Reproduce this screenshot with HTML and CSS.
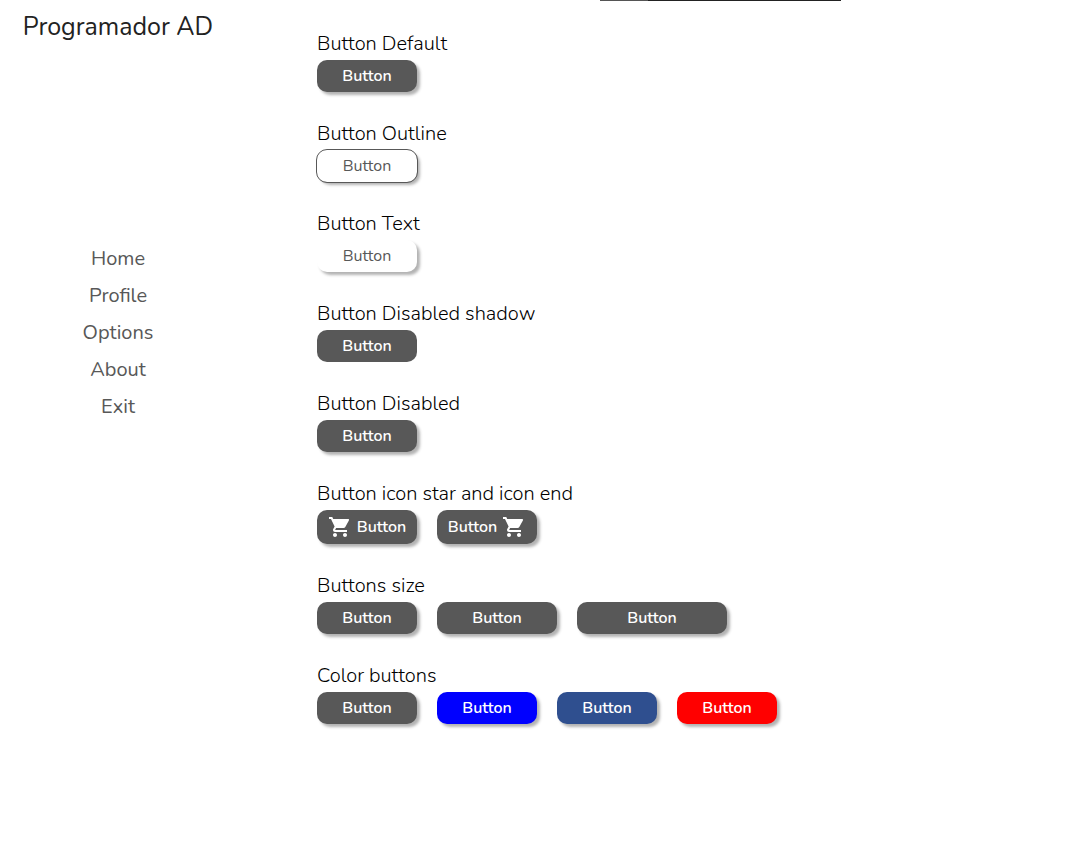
FILE: index.html
```html
<!DOCTYPE html>
<html lang="en">
<head>
<meta charset="utf-8">
<meta name="viewport" content="width=device-width, initial-scale=1">
<title>Programador AD</title>
<link rel="stylesheet" href="styles.css">
</head>
<body>
<svg width="0" height="0" class="sprite" aria-hidden="true">
  <symbol id="cart" viewBox="0 0 24 24">
    <path d="M7 18c-1.100 0-1.990.9-1.990 2S5.900 22 7 22s2-.9 2-2-.9-2-2-2zM1 2v2h2l3.600 7.590-1.350 2.450c-.16.28-.25.61-.25.96 0 1.100.9 2 2 2h12v-2H7.420c-.14 0-.25-.11-.25-.25l.03-.12.9-1.630h7.450c.75 0 1.410-.41 1.750-1.030l3.580-6.490A1 1 0 0 0 20 4H5.210l-.94-2H1zm16 16c-1.100 0-1.990.9-1.990 2s.89 2 1.990 2 2-.9 2-2-.9-2-2-2z"/>
  </symbol>
</svg>
<div class="top-line"></div>
<div class="layout">
  <aside class="sidebar">
    <h1 class="brand">Programador AD</h1>
    <nav class="menu">
      <a href="#home">Home</a>
      <a href="#profile">Profile</a>
      <a href="#options">Options</a>
      <a href="#about">About</a>
      <a href="#exit">Exit</a>
    </nav>
  </aside>
  <main class="content">
    <section>
      <h2 class="label">Button Default</h2>
      <div class="row"><button class="btn">Button</button></div>
    </section>
    <section>
      <h2 class="label">Button Outline</h2>
      <div class="row"><button class="btn btn-text btn-outline">Button</button></div>
    </section>
    <section>
      <h2 class="label">Button Text</h2>
      <div class="row"><button class="btn btn-text">Button</button></div>
    </section>
    <section>
      <h2 class="label">Button Disabled shadow</h2>
      <div class="row"><button class="btn btn-flat">Button</button></div>
    </section>
    <section>
      <h2 class="label">Button Disabled</h2>
      <div class="row"><button class="btn" disabled>Button</button></div>
    </section>
    <section>
      <h2 class="label">Button icon star and icon end</h2>
      <div class="row">
        <button class="btn btn-icon"><svg class="icon"><use href="#cart"/></svg>Button</button>
        <button class="btn btn-icon">Button<svg class="icon"><use href="#cart"/></svg></button>
      </div>
    </section>
    <section>
      <h2 class="label">Buttons size</h2>
      <div class="row">
        <button class="btn">Button</button>
        <button class="btn btn-md">Button</button>
        <button class="btn btn-lg">Button</button>
      </div>
    </section>
    <section>
      <h2 class="label">Color buttons</h2>
      <div class="row">
        <button class="btn">Button</button>
        <button class="btn btn-blue">Button</button>
        <button class="btn btn-navy">Button</button>
        <button class="btn btn-red">Button</button>
      </div>
    </section>
  </main>
</div>
</body>
</html>
```

FILE: styles.css
```css
* { box-sizing: border-box; }

body {
  margin: 0;
  background: #fff;
  color: #000;
  font-family: Nunito, "Open Sans", sans-serif;
}

.sprite { position: absolute; }

.top-line {
  position: absolute;
  top: 0;
  left: 600px;
  width: 241px;
  height: 1px;
  background: linear-gradient(to right, #555 48px, #222 48px);
}

.layout {
  display: grid;
  grid-template-columns: 236px 1fr;
  min-height: 100vh;
}

.sidebar { text-align: center; }

.brand {
  margin: 0;
  padding-top: 10px;
  color: #222;
  font-size: 25px;
  font-weight: 400;
  line-height: 34px;
  white-space: nowrap;
}

.menu {
  display: flex;
  flex-direction: column;
  align-items: center;
  gap: 9px;
  margin-top: 201px;
}

.menu a {
  color: #585858;
  font-size: 20px;
  line-height: 28px;
  text-decoration: none;
}

.content {
  display: flex;
  flex-direction: column;
  gap: 28px;
  padding: 30px 20px 30px 81px;
}

.label {
  margin: 0 0 2px;
  font-size: 20px;
  font-weight: 300;
  line-height: 28px;
}

.row {
  display: flex;
  flex-wrap: wrap;
  gap: 20px;
}

.btn {
  width: 100px;
  height: 32px;
  padding: 0;
  border: 0;
  border-radius: 10px;
  background: #585858;
  box-shadow: 3px 3px 3px rgba(0, 0, 0, 0.3);
  color: #fff;
  font-family: inherit;
  font-size: 16px;
  font-weight: 600;
  line-height: 22px;
}

.btn-text {
  background: #fff;
  color: #585858;
  font-weight: 400;
}

.btn-outline { outline: 1px solid #585858; }

.btn-flat { box-shadow: none; }

.btn-icon {
  display: flex;
  align-items: center;
  justify-content: center;
  gap: 5px;
  height: 34px;
}

.icon {
  width: 24px;
  height: 24px;
  fill: currentColor;
}

.btn-md { width: 120px; }
.btn-lg { width: 150px; }
.btn-blue { background: #00f; }
.btn-navy { background: #2f4f8f; }
.btn-red { background: #f00; }
```
